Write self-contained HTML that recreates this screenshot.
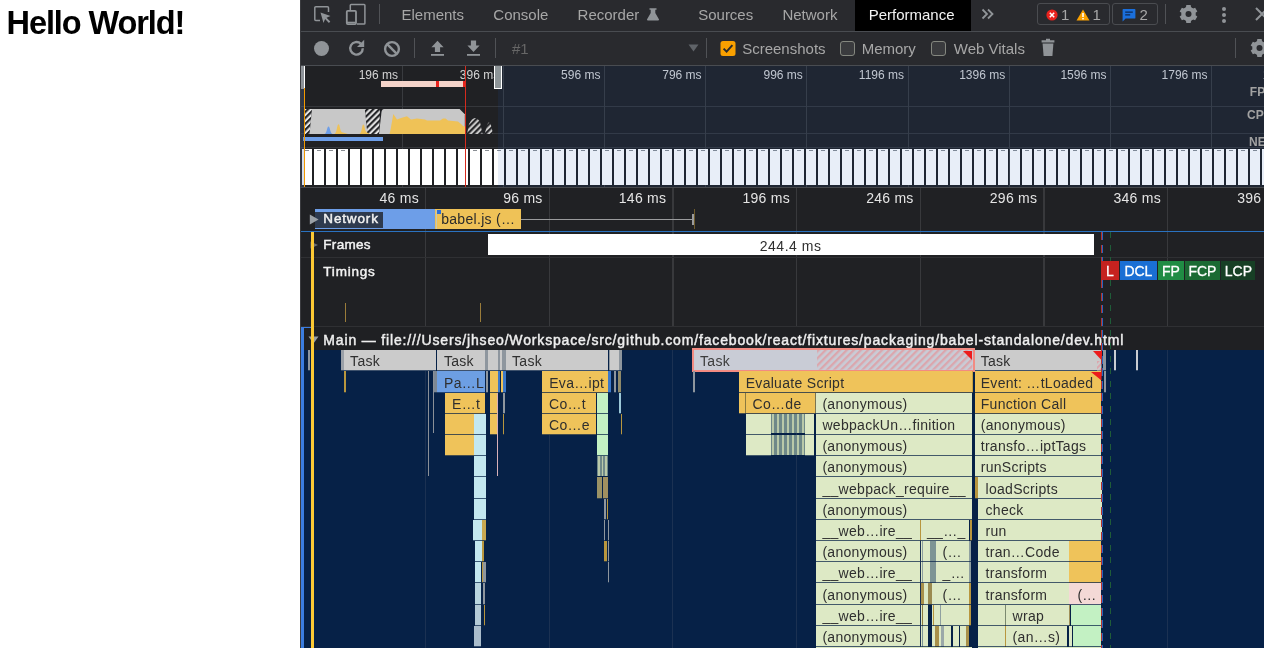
<!DOCTYPE html>
<html><head><meta charset="utf-8"><style>
html,body{margin:0;padding:0;}
body{width:1264px;height:648px;overflow:hidden;position:relative;background:#fff;font-family:"Liberation Sans",sans-serif;}
body>div,body>svg{position:absolute;box-sizing:border-box;}
</style></head><body>
<div style="filter:grayscale(1);top:7.09px;font-size:32.5px;line-height:32.5px;color:#000;font-weight:bold;white-space:nowrap;letter-spacing:-1.1px;left:6.60px;">Hello World!</div>
<div style="left:300.00px;top:0.00px;width:964.00px;height:648.00px;background:#202124;"></div>
<div style="left:300.00px;top:0.00px;width:964.00px;height:31.00px;background:#292a2e;"></div>
<div style="left:300.00px;top:31.00px;width:964.00px;height:1.00px;background:#494c51;"></div>
<div style="left:300.00px;top:32.00px;width:964.00px;height:33.00px;background:#292a2e;"></div>
<div style="left:300.00px;top:65.00px;width:964.00px;height:1.00px;background:#494c51;"></div>
<div style="left:300.00px;top:0.00px;width:1.00px;height:648.00px;background:#3a3b3f;"></div>
<svg style="left:313px;top:5px" width="20" height="20" viewBox="0 0 20 20">
<path d="M7 15.5H2.8a1 1 0 0 1-1-1V2.8a1 1 0 0 1 1-1h11.7a1 1 0 0 1 1 1V7" fill="none" stroke="#909498" stroke-width="1.5"/>
<path d="M7.5 7.5l10 3.6-4 1.6 3.8 3.8-1.4 1.4-3.8-3.8-1.6 4z" fill="#909498"/>
</svg>
<svg style="left:345px;top:3px" width="22" height="22" viewBox="0 0 22 22">
<path d="M5.3 7V2.3a0.8 0.8 0 0 1 .8-.8h13a0.8 0.8 0 0 1 .8.8v17.9a0.8 0.8 0 0 1-.8.8H12" fill="none" stroke="#909498" stroke-width="1.5"/>
<rect x="1.8" y="7.8" width="9.2" height="13.3" rx="1" fill="none" stroke="#909498" stroke-width="1.8"/>
<path d="M2 19.4h8.8" stroke="#909498" stroke-width="1.4"/>
</svg>
<div style="left:379.00px;top:4.00px;width:1.20px;height:19.50px;background:#505256;"></div>
<div style="filter:grayscale(1);top:6.50px;font-size:15px;line-height:15px;color:#a4a7ab;font-weight:normal;white-space:nowrap;left:401.50px;">Elements</div>
<div style="filter:grayscale(1);top:6.50px;font-size:15px;line-height:15px;color:#a4a7ab;font-weight:normal;white-space:nowrap;left:493.30px;">Console</div>
<div style="filter:grayscale(1);top:6.50px;font-size:15px;line-height:15px;color:#a4a7ab;font-weight:normal;white-space:nowrap;left:577.60px;">Recorder</div>
<div style="filter:grayscale(1);top:6.50px;font-size:15px;line-height:15px;color:#a4a7ab;font-weight:normal;white-space:nowrap;left:698.20px;">Sources</div>
<div style="filter:grayscale(1);top:6.50px;font-size:15px;line-height:15px;color:#a4a7ab;font-weight:normal;white-space:nowrap;left:782.40px;">Network</div>
<svg style="left:646px;top:6.5px" width="14" height="14" viewBox="0 0 14 14">
<path d="M3.5 1.2h7v1.6H9.3v3.2l3.6 6.3c.3.6 0 1.2-.7 1.2H1.8c-.7 0-1-.6-.7-1.2L4.7 6V2.8H3.5z" fill="#909498"/>
</svg>
<div style="left:855.00px;top:0.00px;width:116.00px;height:30.50px;background:#000000;"></div>
<div style="filter:grayscale(1);top:6.50px;font-size:15px;line-height:15px;color:#f1f3f4;font-weight:normal;white-space:nowrap;left:868.70px;">Performance</div>
<svg style="left:981px;top:8px" width="14" height="12" viewBox="0 0 14 12">
<path d="M1.5 1.5l4.5 4.5-4.5 4.5M7 1.5l4.5 4.5L7 10.5" fill="none" stroke="#909498" stroke-width="1.8"/>
</svg>
<div style="left:1037px;top:3.2px;width:72.5px;height:21.5px;border:1px solid #4a4c50;border-radius:3px"></div>
<div style="left:1112px;top:3.2px;width:45.5px;height:21.5px;border:1px solid #4a4c50;border-radius:3px"></div>
<svg style="left:1045.5px;top:8.5px" width="12" height="12" viewBox="0 0 12 12">
<circle cx="6" cy="6" r="5.6" fill="#e8221d"/><path d="M3.8 3.8l4.4 4.4M8.2 3.8l-4.4 4.4" stroke="#fff" stroke-width="1.5"/></svg>
<div style="filter:grayscale(1);top:6.50px;font-size:15px;line-height:15px;color:#a4a7ab;font-weight:normal;white-space:nowrap;left:1061.00px;">1</div>
<svg style="left:1076px;top:8.5px" width="14" height="12" viewBox="0 0 14 12">
<path d="M7 0.5L13.5 11.5H0.5z" fill="#f9a000"/><path d="M7 4v4" stroke="#fff" stroke-width="1.6"/><rect x="6.2" y="9" width="1.6" height="1.4" fill="#fff"/></svg>
<div style="filter:grayscale(1);top:6.50px;font-size:15px;line-height:15px;color:#a4a7ab;font-weight:normal;white-space:nowrap;left:1092.50px;">1</div>
<svg style="left:1121.5px;top:7.5px" width="14" height="14" viewBox="0 0 14 14">
<path d="M1.3 1h11.4c.4 0 .7.3.7.7v8.2c0 .4-.3.7-.7.7H3.6L.6 13.5V1.7c0-.4.3-.7.7-.7z" fill="#1a6fdc"/>
<path d="M3.2 4.2h7.6M3.2 6.8h5" stroke="#0c2a55" stroke-width="1.2"/></svg>
<div style="filter:grayscale(1);top:6.50px;font-size:15px;line-height:15px;color:#a4a7ab;font-weight:normal;white-space:nowrap;left:1139.50px;">2</div>
<div style="left:1165.00px;top:4.00px;width:1.20px;height:20.00px;background:#505256;"></div>
<svg style="left:1177px;top:4px" width="24" height="22" viewBox="0 0 24 22">
<path d="M8.97 3.28 L9.31 1.06 L13.69 1.06 L14.03 3.28 L16.05 4.45 L18.15 3.64 L20.33 7.43 L18.58 8.83 L18.58 11.17 L20.33 12.57 L18.15 16.36 L16.05 15.55 L14.03 16.72 L13.69 18.94 L9.31 18.94 L8.97 16.72 L6.95 15.55 L4.85 16.36 L2.67 12.57 L4.42 11.17 L4.42 8.83 L2.67 7.43 L4.85 3.64 L6.95 4.45Z" fill="#909498"/><circle cx="11.5" cy="10" r="6.9" fill="#909498"/><circle cx="11.5" cy="10" r="3" fill="#292a2e"/></svg>
<div style="left:1222px;top:6.5px;width:4px;height:4px;border-radius:50%;background:#909498"></div>
<div style="left:1222px;top:12.5px;width:4px;height:4px;border-radius:50%;background:#909498"></div>
<div style="left:1222px;top:18.8px;width:4px;height:4px;border-radius:50%;background:#909498"></div>
<svg style="left:1254px;top:6px" width="16" height="16" viewBox="0 0 16 16">
<path d="M2 2l12 12M14 2L2 14" stroke="#909498" stroke-width="2"/></svg>
<div style="left:314px;top:40.5px;width:15px;height:15px;border-radius:50%;background:#909498"></div>
<svg style="left:347px;top:38px" width="20" height="20" viewBox="0 0 20 20">
<path d="M15.8 10.3a6.3 6.3 0 1 1-2-4.6" fill="none" stroke="#909498" stroke-width="2.4"/>
<path d="M17.2 1.8v7.2h-7.2z" fill="#909498"/></svg>
<svg style="left:382px;top:39px" width="20" height="20" viewBox="0 0 20 20">
<circle cx="10" cy="10" r="6.9" fill="none" stroke="#909498" stroke-width="2.4"/><path d="M5.2 5.2l9.6 9.6" stroke="#909498" stroke-width="2.4"/></svg>
<div style="left:414.20px;top:38.00px;width:1.20px;height:19.70px;background:#505256;"></div>
<svg style="left:430px;top:40px" width="15" height="17" viewBox="0 0 15 17">
<path d="M7.5 0.8L13.6 7.2H10.1V12H4.9V7.2H1.4z" fill="#909498"/><rect x="1" y="14" width="13" height="1.8" fill="#909498"/></svg>
<svg style="left:465.5px;top:40px" width="15" height="17" viewBox="0 0 15 17">
<path d="M4.9 0.5h5.2v5h3.5L7.5 11.9 1.4 5.5h3.5z" fill="#909498"/><rect x="1" y="14" width="13" height="1.8" fill="#909498"/></svg>
<div style="left:495.00px;top:38.00px;width:1.20px;height:19.70px;background:#505256;"></div>
<div style="filter:grayscale(1);top:41.30px;font-size:15px;line-height:15px;color:#62666b;font-weight:normal;white-space:nowrap;left:512.00px;">#1</div>
<svg style="left:687.5px;top:44px" width="11" height="8" viewBox="0 0 11 8"><path d="M0.5 0.5h10L5.5 7.5z" fill="#5f6368"/></svg>
<div style="left:706.00px;top:38.00px;width:1.20px;height:19.70px;background:#505256;"></div>
<svg style="left:719.5px;top:41px" width="16" height="15" viewBox="0 0 16 15">
<rect x="0.5" y="0" width="15" height="15" rx="2.5" fill="#f9a000"/><path d="M3.6 7.6l3 3 5.8-6.4" fill="none" stroke="#2a2a2a" stroke-width="2"/></svg>
<div style="filter:grayscale(1);top:40.80px;font-size:15px;line-height:15px;color:#a4a7ab;font-weight:normal;white-space:nowrap;left:742.20px;">Screenshots</div>
<div style="left:840px;top:41.4px;width:15px;height:14.3px;border:1.2px solid #84877f;border-radius:3px;background:#3a3b3e"></div>
<div style="filter:grayscale(1);top:40.80px;font-size:15px;line-height:15px;color:#a4a7ab;font-weight:normal;white-space:nowrap;left:861.70px;">Memory</div>
<div style="left:930.8px;top:41.4px;width:15px;height:14.3px;border:1.2px solid #84877f;border-radius:3px;background:#3a3b3e"></div>
<div style="filter:grayscale(1);top:40.80px;font-size:15px;line-height:15px;color:#a4a7ab;font-weight:normal;white-space:nowrap;left:953.80px;">Web Vitals</div>
<svg style="left:1040.5px;top:38px" width="14" height="19" viewBox="0 0 14 19">
<path d="M5 0.8h4v1.4h4.4v2.3H0.6V2.2H5z" fill="#909498"/><path d="M1.6 5.5h10.8l-1 12.6H2.6z" fill="#909498"/></svg>
<div style="left:1235.00px;top:38.00px;width:1.20px;height:19.70px;background:#505256;"></div>
<svg style="left:1247.5px;top:38.5px" width="24" height="22" viewBox="0 0 24 22">
<path d="M8.97 2.28 L9.31 0.06 L13.69 0.06 L14.03 2.28 L16.05 3.45 L18.15 2.64 L20.33 6.43 L18.58 7.83 L18.58 10.17 L20.33 11.57 L18.15 15.36 L16.05 14.55 L14.03 15.72 L13.69 17.94 L9.31 17.94 L8.97 15.72 L6.95 14.55 L4.85 15.36 L2.67 11.57 L4.42 10.17 L4.42 7.83 L2.67 6.43 L4.85 2.64 L6.95 3.45Z" fill="#909498"/><circle cx="11.5" cy="9" r="6.9" fill="#909498"/><circle cx="11.5" cy="9" r="3" fill="#292a2e"/></svg>
<div style="left:301.00px;top:66.00px;width:963.00px;height:121.00px;background:#202124;"></div>
<div style="left:301.00px;top:106.00px;width:963.00px;height:1.00px;background:#35373b;"></div>
<div style="left:301.00px;top:133.00px;width:963.00px;height:1.00px;background:#35373b;"></div>
<div style="left:301.00px;top:147.00px;width:963.00px;height:1.00px;background:#35373b;"></div>
<div style="left:401.50px;top:66.00px;width:1.20px;height:121.00px;background:#393b3f;"></div>
<div style="left:502.70px;top:66.00px;width:1.20px;height:121.00px;background:#393b3f;"></div>
<div style="left:603.90px;top:66.00px;width:1.20px;height:121.00px;background:#393b3f;"></div>
<div style="left:705.10px;top:66.00px;width:1.20px;height:121.00px;background:#393b3f;"></div>
<div style="left:806.30px;top:66.00px;width:1.20px;height:121.00px;background:#393b3f;"></div>
<div style="left:907.50px;top:66.00px;width:1.20px;height:121.00px;background:#393b3f;"></div>
<div style="left:1008.70px;top:66.00px;width:1.20px;height:121.00px;background:#393b3f;"></div>
<div style="left:1109.90px;top:66.00px;width:1.20px;height:121.00px;background:#393b3f;"></div>
<div style="left:1211.10px;top:66.00px;width:1.20px;height:121.00px;background:#393b3f;"></div>
<div style="filter:grayscale(1);top:68.64px;font-size:12px;line-height:12px;color:#d0d3d8;font-weight:normal;white-space:nowrap;right:866.00px;">196 ms</div>
<div style="filter:grayscale(1);top:68.64px;font-size:12px;line-height:12px;color:#d0d3d8;font-weight:normal;white-space:nowrap;right:764.80px;">396 ms</div>
<div style="filter:grayscale(1);top:68.64px;font-size:12px;line-height:12px;color:#d0d3d8;font-weight:normal;white-space:nowrap;right:663.60px;">596 ms</div>
<div style="filter:grayscale(1);top:68.64px;font-size:12px;line-height:12px;color:#d0d3d8;font-weight:normal;white-space:nowrap;right:562.40px;">796 ms</div>
<div style="filter:grayscale(1);top:68.64px;font-size:12px;line-height:12px;color:#d0d3d8;font-weight:normal;white-space:nowrap;right:461.20px;">996 ms</div>
<div style="filter:grayscale(1);top:68.64px;font-size:12px;line-height:12px;color:#d0d3d8;font-weight:normal;white-space:nowrap;right:360.00px;">1196 ms</div>
<div style="filter:grayscale(1);top:68.64px;font-size:12px;line-height:12px;color:#d0d3d8;font-weight:normal;white-space:nowrap;right:258.80px;">1396 ms</div>
<div style="filter:grayscale(1);top:68.64px;font-size:12px;line-height:12px;color:#d0d3d8;font-weight:normal;white-space:nowrap;right:157.60px;">1596 ms</div>
<div style="filter:grayscale(1);top:68.64px;font-size:12px;line-height:12px;color:#d0d3d8;font-weight:normal;white-space:nowrap;right:56.40px;">1796 ms</div>
<div style="filter:grayscale(1);top:68.64px;font-size:12px;line-height:12px;color:#d0d3d8;font-weight:normal;white-space:nowrap;right:-44.80px;">1996 ms</div>
<svg style="left:300px;top:106px" width="200" height="30" viewBox="300 106 200 30">
<defs><pattern id="hb" patternUnits="userSpaceOnUse" width="4.2" height="4.2" patternTransform="rotate(45)">
<rect width="4.2" height="4.2" fill="#e2e2e2"/><rect width="2.1" height="4.2" fill="#202124"/></pattern>
<pattern id="hd" patternUnits="userSpaceOnUse" width="4.2" height="4.2" patternTransform="rotate(45)">
<rect width="4.2" height="4.2" fill="#c8c8c8"/><rect width="2.1" height="4.2" fill="#202124"/></pattern></defs>
<path d="M305 109H312L309.5 134H305z" fill="url(#hb)"/>
<path d="M312 109H365L367.5 134H309.5z" fill="#c8c8c8"/>
<path d="M365 109H380L379 134H367.5z" fill="url(#hb)"/>
<path d="M384 109H459.6L464.8 114.3V134H379L381.5 112Q382 109 384 109z" fill="#c8c8c8"/>
<path d="M324.5 134C327 133 327 126.5 328.5 126.5C330 126.5 330 133 332.5 134z" fill="#6d9ee8"/>
<path d="M334.5 134C337 133 337 124.2 338.4 124.2C340 124.2 339.8 131 342 132.2L348 134z" fill="#efc257"/>
<path d="M359.5 134C362 133 362 124.6 363.3 124.6C364.8 124.6 364.6 131.5 366.8 132.5L370 134z" fill="#efc257"/>
<path d="M389.5 134L390.5 130L393.3 114L395 116.5L397 119.5L401 118L407 116.2L411 119.5L417 118.5L425 119.5L427 120.5L440 120.5L443 118.5L445.5 118.5L448 120.5L458 121.5L461 124L463 126L465 126.5V134z" fill="#efc257"/>
<path d="M467 134L469 124Q474.5 113 480 122L482.5 134z" fill="url(#hd)"/>
<path d="M484.7 134L486.5 127Q489 118 491.5 127L493 134z" fill="url(#hd)"/>
</svg>
<div style="left:303.00px;top:137.00px;width:80.00px;height:4.00px;background:#6d9ee8;"></div>
<div style="left:381.00px;top:81.00px;width:84.20px;height:6.00px;background:#f4d3c9;"></div>
<div style="left:436.40px;top:81.00px;width:3.10px;height:6.00px;background:#e8231d;"></div>
<div style="left:462.50px;top:81.00px;width:2.70px;height:6.00px;background:#e8231d;"></div>
<div style="left:302.00px;top:149.00px;width:10.00px;height:36.00px;background:#ffffff;"></div>
<div style="left:305.00px;top:150.20px;width:3.50px;height:0.80px;background:#8a8e94;"></div>
<div style="left:314.00px;top:149.00px;width:10.00px;height:36.00px;background:#ffffff;"></div>
<div style="left:317.00px;top:150.20px;width:3.50px;height:0.80px;background:#8a8e94;"></div>
<div style="left:326.00px;top:149.00px;width:10.00px;height:36.00px;background:#ffffff;"></div>
<div style="left:329.00px;top:150.20px;width:3.50px;height:0.80px;background:#8a8e94;"></div>
<div style="left:338.00px;top:149.00px;width:10.00px;height:36.00px;background:#ffffff;"></div>
<div style="left:341.00px;top:150.20px;width:3.50px;height:0.80px;background:#8a8e94;"></div>
<div style="left:350.00px;top:149.00px;width:10.00px;height:36.00px;background:#ffffff;"></div>
<div style="left:362.00px;top:149.00px;width:10.00px;height:36.00px;background:#ffffff;"></div>
<div style="left:374.00px;top:149.00px;width:10.00px;height:36.00px;background:#ffffff;"></div>
<div style="left:386.00px;top:149.00px;width:10.00px;height:36.00px;background:#ffffff;"></div>
<div style="left:398.00px;top:149.00px;width:10.00px;height:36.00px;background:#ffffff;"></div>
<div style="left:410.00px;top:149.00px;width:10.00px;height:36.00px;background:#ffffff;"></div>
<div style="left:422.00px;top:149.00px;width:10.00px;height:36.00px;background:#ffffff;"></div>
<div style="left:434.00px;top:149.00px;width:10.00px;height:36.00px;background:#ffffff;"></div>
<div style="left:446.00px;top:149.00px;width:10.00px;height:36.00px;background:#ffffff;"></div>
<div style="left:458.00px;top:149.00px;width:10.00px;height:36.00px;background:#ffffff;"></div>
<div style="left:470.00px;top:149.00px;width:10.00px;height:36.00px;background:#ffffff;"></div>
<div style="left:473.00px;top:150.20px;width:3.50px;height:0.80px;background:#8a8e94;"></div>
<div style="left:482.00px;top:149.00px;width:10.00px;height:36.00px;background:#ffffff;"></div>
<div style="left:485.00px;top:150.20px;width:3.50px;height:0.80px;background:#8a8e94;"></div>
<div style="left:494.00px;top:149.00px;width:10.00px;height:36.00px;background:#ffffff;"></div>
<div style="left:497.00px;top:150.20px;width:3.50px;height:0.80px;background:#8a8e94;"></div>
<div style="left:506.00px;top:149.00px;width:10.00px;height:36.00px;background:#ffffff;"></div>
<div style="left:509.00px;top:150.20px;width:3.50px;height:0.80px;background:#8a8e94;"></div>
<div style="left:518.00px;top:149.00px;width:10.00px;height:36.00px;background:#ffffff;"></div>
<div style="left:521.00px;top:150.20px;width:3.50px;height:0.80px;background:#8a8e94;"></div>
<div style="left:530.00px;top:149.00px;width:10.00px;height:36.00px;background:#ffffff;"></div>
<div style="left:533.00px;top:150.20px;width:3.50px;height:0.80px;background:#8a8e94;"></div>
<div style="left:542.00px;top:149.00px;width:10.00px;height:36.00px;background:#ffffff;"></div>
<div style="left:545.00px;top:150.20px;width:3.50px;height:0.80px;background:#8a8e94;"></div>
<div style="left:554.00px;top:149.00px;width:10.00px;height:36.00px;background:#ffffff;"></div>
<div style="left:557.00px;top:150.20px;width:3.50px;height:0.80px;background:#8a8e94;"></div>
<div style="left:566.00px;top:149.00px;width:10.00px;height:36.00px;background:#ffffff;"></div>
<div style="left:569.00px;top:150.20px;width:3.50px;height:0.80px;background:#8a8e94;"></div>
<div style="left:578.00px;top:149.00px;width:10.00px;height:36.00px;background:#ffffff;"></div>
<div style="left:581.00px;top:150.20px;width:3.50px;height:0.80px;background:#8a8e94;"></div>
<div style="left:590.00px;top:149.00px;width:10.00px;height:36.00px;background:#ffffff;"></div>
<div style="left:593.00px;top:150.20px;width:3.50px;height:0.80px;background:#8a8e94;"></div>
<div style="left:602.00px;top:149.00px;width:10.00px;height:36.00px;background:#ffffff;"></div>
<div style="left:605.00px;top:150.20px;width:3.50px;height:0.80px;background:#8a8e94;"></div>
<div style="left:614.00px;top:149.00px;width:10.00px;height:36.00px;background:#ffffff;"></div>
<div style="left:617.00px;top:150.20px;width:3.50px;height:0.80px;background:#8a8e94;"></div>
<div style="left:626.00px;top:149.00px;width:10.00px;height:36.00px;background:#ffffff;"></div>
<div style="left:629.00px;top:150.20px;width:3.50px;height:0.80px;background:#8a8e94;"></div>
<div style="left:638.00px;top:149.00px;width:10.00px;height:36.00px;background:#ffffff;"></div>
<div style="left:641.00px;top:150.20px;width:3.50px;height:0.80px;background:#8a8e94;"></div>
<div style="left:650.00px;top:149.00px;width:10.00px;height:36.00px;background:#ffffff;"></div>
<div style="left:653.00px;top:150.20px;width:3.50px;height:0.80px;background:#8a8e94;"></div>
<div style="left:662.00px;top:149.00px;width:10.00px;height:36.00px;background:#ffffff;"></div>
<div style="left:665.00px;top:150.20px;width:3.50px;height:0.80px;background:#8a8e94;"></div>
<div style="left:674.00px;top:149.00px;width:10.00px;height:36.00px;background:#ffffff;"></div>
<div style="left:677.00px;top:150.20px;width:3.50px;height:0.80px;background:#8a8e94;"></div>
<div style="left:686.00px;top:149.00px;width:10.00px;height:36.00px;background:#ffffff;"></div>
<div style="left:689.00px;top:150.20px;width:3.50px;height:0.80px;background:#8a8e94;"></div>
<div style="left:698.00px;top:149.00px;width:10.00px;height:36.00px;background:#ffffff;"></div>
<div style="left:701.00px;top:150.20px;width:3.50px;height:0.80px;background:#8a8e94;"></div>
<div style="left:710.00px;top:149.00px;width:10.00px;height:36.00px;background:#ffffff;"></div>
<div style="left:713.00px;top:150.20px;width:3.50px;height:0.80px;background:#8a8e94;"></div>
<div style="left:722.00px;top:149.00px;width:10.00px;height:36.00px;background:#ffffff;"></div>
<div style="left:725.00px;top:150.20px;width:3.50px;height:0.80px;background:#8a8e94;"></div>
<div style="left:734.00px;top:149.00px;width:10.00px;height:36.00px;background:#ffffff;"></div>
<div style="left:737.00px;top:150.20px;width:3.50px;height:0.80px;background:#8a8e94;"></div>
<div style="left:746.00px;top:149.00px;width:10.00px;height:36.00px;background:#ffffff;"></div>
<div style="left:749.00px;top:150.20px;width:3.50px;height:0.80px;background:#8a8e94;"></div>
<div style="left:758.00px;top:149.00px;width:10.00px;height:36.00px;background:#ffffff;"></div>
<div style="left:761.00px;top:150.20px;width:3.50px;height:0.80px;background:#8a8e94;"></div>
<div style="left:770.00px;top:149.00px;width:10.00px;height:36.00px;background:#ffffff;"></div>
<div style="left:773.00px;top:150.20px;width:3.50px;height:0.80px;background:#8a8e94;"></div>
<div style="left:782.00px;top:149.00px;width:10.00px;height:36.00px;background:#ffffff;"></div>
<div style="left:785.00px;top:150.20px;width:3.50px;height:0.80px;background:#8a8e94;"></div>
<div style="left:794.00px;top:149.00px;width:10.00px;height:36.00px;background:#ffffff;"></div>
<div style="left:797.00px;top:150.20px;width:3.50px;height:0.80px;background:#8a8e94;"></div>
<div style="left:806.00px;top:149.00px;width:10.00px;height:36.00px;background:#ffffff;"></div>
<div style="left:809.00px;top:150.20px;width:3.50px;height:0.80px;background:#8a8e94;"></div>
<div style="left:818.00px;top:149.00px;width:10.00px;height:36.00px;background:#ffffff;"></div>
<div style="left:821.00px;top:150.20px;width:3.50px;height:0.80px;background:#8a8e94;"></div>
<div style="left:830.00px;top:149.00px;width:10.00px;height:36.00px;background:#ffffff;"></div>
<div style="left:833.00px;top:150.20px;width:3.50px;height:0.80px;background:#8a8e94;"></div>
<div style="left:842.00px;top:149.00px;width:10.00px;height:36.00px;background:#ffffff;"></div>
<div style="left:845.00px;top:150.20px;width:3.50px;height:0.80px;background:#8a8e94;"></div>
<div style="left:854.00px;top:149.00px;width:10.00px;height:36.00px;background:#ffffff;"></div>
<div style="left:857.00px;top:150.20px;width:3.50px;height:0.80px;background:#8a8e94;"></div>
<div style="left:866.00px;top:149.00px;width:10.00px;height:36.00px;background:#ffffff;"></div>
<div style="left:869.00px;top:150.20px;width:3.50px;height:0.80px;background:#8a8e94;"></div>
<div style="left:878.00px;top:149.00px;width:10.00px;height:36.00px;background:#ffffff;"></div>
<div style="left:881.00px;top:150.20px;width:3.50px;height:0.80px;background:#8a8e94;"></div>
<div style="left:890.00px;top:149.00px;width:10.00px;height:36.00px;background:#ffffff;"></div>
<div style="left:893.00px;top:150.20px;width:3.50px;height:0.80px;background:#8a8e94;"></div>
<div style="left:902.00px;top:149.00px;width:10.00px;height:36.00px;background:#ffffff;"></div>
<div style="left:905.00px;top:150.20px;width:3.50px;height:0.80px;background:#8a8e94;"></div>
<div style="left:914.00px;top:149.00px;width:10.00px;height:36.00px;background:#ffffff;"></div>
<div style="left:917.00px;top:150.20px;width:3.50px;height:0.80px;background:#8a8e94;"></div>
<div style="left:926.00px;top:149.00px;width:10.00px;height:36.00px;background:#ffffff;"></div>
<div style="left:929.00px;top:150.20px;width:3.50px;height:0.80px;background:#8a8e94;"></div>
<div style="left:938.00px;top:149.00px;width:10.00px;height:36.00px;background:#ffffff;"></div>
<div style="left:941.00px;top:150.20px;width:3.50px;height:0.80px;background:#8a8e94;"></div>
<div style="left:950.00px;top:149.00px;width:10.00px;height:36.00px;background:#ffffff;"></div>
<div style="left:953.00px;top:150.20px;width:3.50px;height:0.80px;background:#8a8e94;"></div>
<div style="left:962.00px;top:149.00px;width:10.00px;height:36.00px;background:#ffffff;"></div>
<div style="left:965.00px;top:150.20px;width:3.50px;height:0.80px;background:#8a8e94;"></div>
<div style="left:974.00px;top:149.00px;width:10.00px;height:36.00px;background:#ffffff;"></div>
<div style="left:977.00px;top:150.20px;width:3.50px;height:0.80px;background:#8a8e94;"></div>
<div style="left:986.00px;top:149.00px;width:10.00px;height:36.00px;background:#ffffff;"></div>
<div style="left:989.00px;top:150.20px;width:3.50px;height:0.80px;background:#8a8e94;"></div>
<div style="left:998.00px;top:149.00px;width:10.00px;height:36.00px;background:#ffffff;"></div>
<div style="left:1001.00px;top:150.20px;width:3.50px;height:0.80px;background:#8a8e94;"></div>
<div style="left:1010.00px;top:149.00px;width:10.00px;height:36.00px;background:#ffffff;"></div>
<div style="left:1013.00px;top:150.20px;width:3.50px;height:0.80px;background:#8a8e94;"></div>
<div style="left:1022.00px;top:149.00px;width:10.00px;height:36.00px;background:#ffffff;"></div>
<div style="left:1025.00px;top:150.20px;width:3.50px;height:0.80px;background:#8a8e94;"></div>
<div style="left:1034.00px;top:149.00px;width:10.00px;height:36.00px;background:#ffffff;"></div>
<div style="left:1037.00px;top:150.20px;width:3.50px;height:0.80px;background:#8a8e94;"></div>
<div style="left:1046.00px;top:149.00px;width:10.00px;height:36.00px;background:#ffffff;"></div>
<div style="left:1049.00px;top:150.20px;width:3.50px;height:0.80px;background:#8a8e94;"></div>
<div style="left:1058.00px;top:149.00px;width:10.00px;height:36.00px;background:#ffffff;"></div>
<div style="left:1061.00px;top:150.20px;width:3.50px;height:0.80px;background:#8a8e94;"></div>
<div style="left:1070.00px;top:149.00px;width:10.00px;height:36.00px;background:#ffffff;"></div>
<div style="left:1073.00px;top:150.20px;width:3.50px;height:0.80px;background:#8a8e94;"></div>
<div style="left:1082.00px;top:149.00px;width:10.00px;height:36.00px;background:#ffffff;"></div>
<div style="left:1085.00px;top:150.20px;width:3.50px;height:0.80px;background:#8a8e94;"></div>
<div style="left:1094.00px;top:149.00px;width:10.00px;height:36.00px;background:#ffffff;"></div>
<div style="left:1097.00px;top:150.20px;width:3.50px;height:0.80px;background:#8a8e94;"></div>
<div style="left:1106.00px;top:149.00px;width:10.00px;height:36.00px;background:#ffffff;"></div>
<div style="left:1109.00px;top:150.20px;width:3.50px;height:0.80px;background:#8a8e94;"></div>
<div style="left:1118.00px;top:149.00px;width:10.00px;height:36.00px;background:#ffffff;"></div>
<div style="left:1121.00px;top:150.20px;width:3.50px;height:0.80px;background:#8a8e94;"></div>
<div style="left:1130.00px;top:149.00px;width:10.00px;height:36.00px;background:#ffffff;"></div>
<div style="left:1133.00px;top:150.20px;width:3.50px;height:0.80px;background:#8a8e94;"></div>
<div style="left:1142.00px;top:149.00px;width:10.00px;height:36.00px;background:#ffffff;"></div>
<div style="left:1145.00px;top:150.20px;width:3.50px;height:0.80px;background:#8a8e94;"></div>
<div style="left:1154.00px;top:149.00px;width:10.00px;height:36.00px;background:#ffffff;"></div>
<div style="left:1157.00px;top:150.20px;width:3.50px;height:0.80px;background:#8a8e94;"></div>
<div style="left:1166.00px;top:149.00px;width:10.00px;height:36.00px;background:#ffffff;"></div>
<div style="left:1169.00px;top:150.20px;width:3.50px;height:0.80px;background:#8a8e94;"></div>
<div style="left:1178.00px;top:149.00px;width:10.00px;height:36.00px;background:#ffffff;"></div>
<div style="left:1181.00px;top:150.20px;width:3.50px;height:0.80px;background:#8a8e94;"></div>
<div style="left:1190.00px;top:149.00px;width:10.00px;height:36.00px;background:#ffffff;"></div>
<div style="left:1193.00px;top:150.20px;width:3.50px;height:0.80px;background:#8a8e94;"></div>
<div style="left:1202.00px;top:149.00px;width:10.00px;height:36.00px;background:#ffffff;"></div>
<div style="left:1205.00px;top:150.20px;width:3.50px;height:0.80px;background:#8a8e94;"></div>
<div style="left:1214.00px;top:149.00px;width:10.00px;height:36.00px;background:#ffffff;"></div>
<div style="left:1217.00px;top:150.20px;width:3.50px;height:0.80px;background:#8a8e94;"></div>
<div style="left:1226.00px;top:149.00px;width:10.00px;height:36.00px;background:#ffffff;"></div>
<div style="left:1229.00px;top:150.20px;width:3.50px;height:0.80px;background:#8a8e94;"></div>
<div style="left:1238.00px;top:149.00px;width:10.00px;height:36.00px;background:#ffffff;"></div>
<div style="left:1241.00px;top:150.20px;width:3.50px;height:0.80px;background:#8a8e94;"></div>
<div style="left:1250.00px;top:149.00px;width:10.00px;height:36.00px;background:#ffffff;"></div>
<div style="left:1253.00px;top:150.20px;width:3.50px;height:0.80px;background:#8a8e94;"></div>
<div style="left:1262.00px;top:149.00px;width:10.00px;height:36.00px;background:#ffffff;"></div>
<div style="left:1265.00px;top:150.20px;width:3.50px;height:0.80px;background:#8a8e94;"></div>
<div style="left:301.00px;top:88.00px;width:3.00px;height:99.00px;background:rgba(90,120,170,0.25);"></div>
<div style="left:497.50px;top:89.00px;width:766.50px;height:98.00px;background:rgba(25,85,185,0.1);"></div>
<div style="left:497.50px;top:66.00px;width:766.50px;height:23.00px;background:rgba(25,85,185,0.1);"></div>
<div style="filter:grayscale(1);top:85.74px;font-size:12px;line-height:12px;color:#9aa3b0;font-weight:bold;white-space:nowrap;left:1249.80px;">FPS</div>
<div style="filter:grayscale(1);top:108.54px;font-size:12px;line-height:12px;color:#9aa3b0;font-weight:bold;white-space:nowrap;left:1247.10px;">CPU</div>
<div style="filter:grayscale(1);top:135.54px;font-size:12px;line-height:12px;color:#9aa3b0;font-weight:bold;white-space:nowrap;left:1249.10px;">NET</div>
<div style="left:301px;top:66px;width:4px;height:22.5px;background:#8e9399;border-right:1px solid #fff"></div>
<div style="left:493.8px;top:66px;width:8px;height:23px;background:#8e9598;border:1px solid #fff;border-top:0"></div>
<div style="left:304.00px;top:88.00px;width:1.20px;height:99.00px;background:#f29900;"></div>
<div style="left:464.90px;top:66.00px;width:1.40px;height:121.00px;background:#d52b1e;"></div>
<div style="left:300.00px;top:187.00px;width:964.00px;height:1.00px;background:#46484c;"></div>
<div style="left:301.00px;top:188.00px;width:963.00px;height:162.00px;background:#202124;"></div>
<div style="left:425.00px;top:188.00px;width:1.20px;height:162.00px;background:#38393c;"></div>
<div style="left:548.67px;top:188.00px;width:1.20px;height:162.00px;background:#38393c;"></div>
<div style="left:672.34px;top:188.00px;width:1.20px;height:162.00px;background:#38393c;"></div>
<div style="left:796.01px;top:188.00px;width:1.20px;height:162.00px;background:#38393c;"></div>
<div style="left:919.68px;top:188.00px;width:1.20px;height:162.00px;background:#38393c;"></div>
<div style="left:1043.35px;top:188.00px;width:1.20px;height:162.00px;background:#38393c;"></div>
<div style="left:1167.02px;top:188.00px;width:1.20px;height:162.00px;background:#38393c;"></div>
<div style="left:1290.69px;top:188.00px;width:1.20px;height:162.00px;background:#38393c;"></div>
<div style="filter:grayscale(1);top:191.35px;font-size:14px;line-height:14px;color:#e3e4e6;font-weight:normal;white-space:nowrap;letter-spacing:0.25px;right:845.10px;">46 ms</div>
<div style="filter:grayscale(1);top:191.35px;font-size:14px;line-height:14px;color:#e3e4e6;font-weight:normal;white-space:nowrap;letter-spacing:0.25px;right:721.43px;">96 ms</div>
<div style="filter:grayscale(1);top:191.35px;font-size:14px;line-height:14px;color:#e3e4e6;font-weight:normal;white-space:nowrap;letter-spacing:0.25px;right:597.76px;">146 ms</div>
<div style="filter:grayscale(1);top:191.35px;font-size:14px;line-height:14px;color:#e3e4e6;font-weight:normal;white-space:nowrap;letter-spacing:0.25px;right:474.09px;">196 ms</div>
<div style="filter:grayscale(1);top:191.35px;font-size:14px;line-height:14px;color:#e3e4e6;font-weight:normal;white-space:nowrap;letter-spacing:0.25px;right:350.42px;">246 ms</div>
<div style="filter:grayscale(1);top:191.35px;font-size:14px;line-height:14px;color:#e3e4e6;font-weight:normal;white-space:nowrap;letter-spacing:0.25px;right:226.75px;">296 ms</div>
<div style="filter:grayscale(1);top:191.35px;font-size:14px;line-height:14px;color:#e3e4e6;font-weight:normal;white-space:nowrap;letter-spacing:0.25px;right:103.08px;">346 ms</div>
<div style="filter:grayscale(1);top:191.35px;font-size:14px;line-height:14px;color:#e3e4e6;font-weight:normal;white-space:nowrap;letter-spacing:0.25px;right:-20.59px;">396 ms</div>
<div style="left:314.50px;top:208.90px;width:120.00px;height:20.20px;background:#6d9ee8;"></div>
<div style="left:314.50px;top:212.30px;width:68.30px;height:15.50px;background:#2e3a4e;"></div>
<svg style="left:308.5px;top:213.5px" width="11" height="11" viewBox="0 0 11 11"><path d="M0.8 0.6L9.6 5.5L0.8 10.4z" fill="#9aa0a6"/></svg>
<div style="filter:grayscale(1);top:212.27px;font-size:13.5px;line-height:13.5px;color:#f1f3f4;font-weight:normal;white-space:nowrap;letter-spacing:0.85px;-webkit-text-stroke:0.45px #f1f3f4;left:323.30px;">Network</div>
<div style="left:435.00px;top:208.90px;width:85.60px;height:20.20px;background:#efc257;"></div>
<div style="left:435.80px;top:209.50px;width:1.00px;height:19.00px;background:#c9c9b0;"></div>
<div style="left:437.20px;top:210.00px;width:3.80px;height:4.00px;background:#2e6fd6;"></div>
<div style="filter:grayscale(1);top:211.85px;font-size:14px;line-height:14px;color:#2b2b2b;font-weight:normal;white-space:nowrap;letter-spacing:0.3px;left:441.20px;">babel.js (…</div>
<div style="left:520.60px;top:218.80px;width:172.70px;height:1.40px;background:#9a9b9d;"></div>
<div style="left:692.30px;top:214.00px;width:1.30px;height:11.00px;background:#9a9b9d;"></div>
<div style="left:693.80px;top:209.00px;width:1.00px;height:20.00px;background:#6d5a2a;"></div>
<div style="left:301.00px;top:231.00px;width:963.00px;height:1.20px;background:#2a72c0;"></div>
<svg style="left:310px;top:241px" width="9" height="8" viewBox="0 0 9 8"><path d="M0.5 0.5L8 4L0.5 7.5z" fill="#6b6e72"/></svg>
<div style="filter:grayscale(1);top:238.27px;font-size:13.5px;line-height:13.5px;color:#f1f3f4;font-weight:normal;white-space:nowrap;letter-spacing:0.3px;-webkit-text-stroke:0.45px #f1f3f4;left:323.30px;">Frames</div>
<div style="left:488.20px;top:233.90px;width:605.70px;height:21.60px;background:#ffffff;"></div>
<div style="filter:grayscale(1);top:238.95px;font-size:14px;line-height:14px;color:#303030;font-weight:normal;white-space:nowrap;letter-spacing:0.5px;left:490.60px;width:600px;text-align:center;">244.4 ms</div>
<div style="left:301.00px;top:256.80px;width:963.00px;height:1.00px;background:#2f3033;"></div>
<div style="filter:grayscale(1);top:264.57px;font-size:13.5px;line-height:13.5px;color:#f1f3f4;font-weight:normal;white-space:nowrap;letter-spacing:0.8px;-webkit-text-stroke:0.45px #f1f3f4;left:323.30px;">Timings</div>
<div style="left:1101.20px;top:260.70px;width:17.40px;height:19.70px;background:#c5221f;"></div>
<div style="filter:grayscale(1);top:263.75px;font-size:14px;line-height:14px;color:#ffffff;font-weight:normal;white-space:nowrap;-webkit-text-stroke:0.3px #ffffff;left:809.90px;width:600px;text-align:center;">L</div>
<div style="left:1119.70px;top:260.70px;width:37.40px;height:19.70px;background:#1a6fd4;"></div>
<div style="filter:grayscale(1);top:263.75px;font-size:14px;line-height:14px;color:#ffffff;font-weight:normal;white-space:nowrap;-webkit-text-stroke:0.3px #ffffff;left:838.40px;width:600px;text-align:center;">DCL</div>
<div style="left:1158.40px;top:260.70px;width:25.20px;height:19.70px;background:#208c44;"></div>
<div style="filter:grayscale(1);top:263.75px;font-size:14px;line-height:14px;color:#ffffff;font-weight:normal;white-space:nowrap;-webkit-text-stroke:0.3px #ffffff;left:871.00px;width:600px;text-align:center;">FP</div>
<div style="left:1185.10px;top:260.70px;width:34.70px;height:19.70px;background:#1b6a33;"></div>
<div style="filter:grayscale(1);top:263.75px;font-size:14px;line-height:14px;color:#ffffff;font-weight:normal;white-space:nowrap;-webkit-text-stroke:0.3px #ffffff;left:902.45px;width:600px;text-align:center;">FCP</div>
<div style="left:1221.30px;top:260.70px;width:34.20px;height:19.70px;background:#173f25;"></div>
<div style="filter:grayscale(1);top:263.75px;font-size:14px;line-height:14px;color:#ffffff;font-weight:normal;white-space:nowrap;-webkit-text-stroke:0.3px #ffffff;left:938.40px;width:600px;text-align:center;">LCP</div>
<div style="left:344.60px;top:303.20px;width:1.40px;height:19.10px;background:#9a7c3a;"></div>
<div style="left:479.50px;top:303.20px;width:1.40px;height:19.10px;background:#9a7c3a;"></div>
<div style="left:301.00px;top:326.00px;width:963.00px;height:1.00px;background:#2f3033;"></div>
<div style="left:301.00px;top:327.00px;width:963.00px;height:23.00px;background:#1f2023;"></div>
<svg style="left:308px;top:335.5px" width="11" height="8" viewBox="0 0 11 8"><path d="M0.5 0.5h10L5.5 7.5z" fill="#9aa0a6"/></svg>
<div style="filter:grayscale(1);top:332.95px;font-size:14px;line-height:14px;color:#eceef0;font-weight:normal;white-space:nowrap;letter-spacing:0.84px;-webkit-text-stroke:0.45px #eceef0;left:323.30px;">Main — file:///Users/jhseo/Workspace/src/github.com/facebook/react/fixtures/packaging/babel-standalone/dev.html</div>
<div style="left:301.00px;top:350.00px;width:963.00px;height:298.00px;background:#062147;"></div>
<div style="left:425.10px;top:350.00px;width:1.00px;height:298.00px;background:#1b3152;"></div>
<div style="left:548.77px;top:350.00px;width:1.00px;height:298.00px;background:#1b3152;"></div>
<div style="left:672.44px;top:350.00px;width:1.00px;height:298.00px;background:#1b3152;"></div>
<div style="left:796.11px;top:350.00px;width:1.00px;height:298.00px;background:#1b3152;"></div>
<div style="left:919.78px;top:350.00px;width:1.00px;height:298.00px;background:#1b3152;"></div>
<div style="left:1043.45px;top:350.00px;width:1.00px;height:298.00px;background:#1b3152;"></div>
<div style="left:1167.12px;top:350.00px;width:1.00px;height:298.00px;background:#1b3152;"></div>
<div style="left:1290.79px;top:350.00px;width:1.00px;height:298.00px;background:#1b3152;"></div>
<div style="left:307.60px;top:350.25px;width:2.80px;height:21.20px;background:#8e969e;border-bottom:1.5px solid rgba(6,33,71,0.72);"></div>
<div style="left:341.10px;top:350.25px;width:2.50px;height:21.20px;background:#9aa0a8;border-bottom:1.5px solid rgba(6,33,71,0.72);"></div>
<div style="left:343.60px;top:350.25px;width:92.00px;height:21.20px;background:#cbcbcb;border-bottom:1.5px solid rgba(6,33,71,0.72);"></div>
<div style="filter:grayscale(1);top:354.30px;font-size:14px;line-height:14px;color:#2f2f2f;font-weight:normal;white-space:nowrap;letter-spacing:0.3px;left:350.10px;">Task</div>
<div style="left:436.70px;top:350.25px;width:48.60px;height:21.20px;background:#cbcbcb;border-bottom:1.5px solid rgba(6,33,71,0.72);"></div>
<div style="filter:grayscale(1);top:354.30px;font-size:14px;line-height:14px;color:#2f2f2f;font-weight:normal;white-space:nowrap;letter-spacing:0.3px;left:443.90px;">Task</div>
<div style="left:485.30px;top:350.25px;width:3.00px;height:21.20px;background:#8e969e;border-bottom:1.5px solid rgba(6,33,71,0.72);"></div>
<div style="left:488.30px;top:350.25px;width:9.70px;height:21.20px;background:#cbcbcb;border-bottom:1.5px solid rgba(6,33,71,0.72);"></div>
<div style="left:498.00px;top:350.25px;width:2.00px;height:21.20px;background:#8e969e;border-bottom:1.5px solid rgba(6,33,71,0.72);"></div>
<div style="left:500.00px;top:350.25px;width:1.50px;height:21.20px;background:#cbcbcb;border-bottom:1.5px solid rgba(6,33,71,0.72);"></div>
<div style="left:502.00px;top:350.25px;width:3.70px;height:21.20px;background:#8e969e;border-bottom:1.5px solid rgba(6,33,71,0.72);"></div>
<div style="left:505.70px;top:350.25px;width:102.80px;height:21.20px;background:#cbcbcb;border-bottom:1.5px solid rgba(6,33,71,0.72);"></div>
<div style="filter:grayscale(1);top:354.30px;font-size:14px;line-height:14px;color:#2f2f2f;font-weight:normal;white-space:nowrap;letter-spacing:0.3px;left:512.00px;">Task</div>
<div style="left:608.50px;top:350.25px;width:1.50px;height:21.20px;background:#8e969e;border-bottom:1.5px solid rgba(6,33,71,0.72);"></div>
<div style="left:610.00px;top:350.25px;width:9.00px;height:21.20px;background:#cbcbcb;border-bottom:1.5px solid rgba(6,33,71,0.72);"></div>
<div style="left:619.00px;top:350.25px;width:3.00px;height:21.20px;background:#8e969e;border-bottom:1.5px solid rgba(6,33,71,0.72);"></div>
<div style="left:692.2px;top:348px;width:282.5px;height:23.7px;border:2px solid #f28b82;background:#c9ccd6"></div>
<svg style="left:817.2px;top:350px" width="155.5" height="19.7" viewBox="0 0 155.5 19.7"><defs><pattern id="ph" patternUnits="userSpaceOnUse" width="5" height="5" patternTransform="rotate(45)"><rect width="5" height="5" fill="#c9ccd6"/><rect width="2.3" height="5" fill="#dba6ad"/></pattern></defs><rect width="155.5" height="19.7" fill="url(#ph)"/></svg>
<div style="filter:grayscale(1);top:354.30px;font-size:14px;line-height:14px;color:#3a3d44;font-weight:normal;white-space:nowrap;letter-spacing:0.3px;left:700.00px;">Task</div>
<svg style="left:962.6px;top:350.6px" width="9.2" height="9.2" viewBox="0 0 10 10"><path d="M0 0H10V10z" fill="#ec1c1c"/></svg>
<div style="left:975.10px;top:350.25px;width:126.40px;height:21.20px;background:#cbcbcb;border-bottom:1.5px solid rgba(6,33,71,0.72);"></div>
<div style="filter:grayscale(1);top:354.30px;font-size:14px;line-height:14px;color:#2f2f2f;font-weight:normal;white-space:nowrap;letter-spacing:0.3px;left:980.70px;">Task</div>
<svg style="left:1097px;top:361px" width="4.5" height="9.5" viewBox="0 0 4.5 9.5"><defs><pattern id="ph2" patternUnits="userSpaceOnUse" width="4" height="4" patternTransform="rotate(45)"><rect width="4" height="4" fill="#cbcbcb"/><rect width="2" height="4" fill="#dba6ad"/></pattern></defs><rect width="4.5" height="9.5" fill="url(#ph2)"/></svg>
<svg style="left:1092.5px;top:350.6px" width="9" height="9.7" viewBox="0 0 10 10" preserveAspectRatio="none"><path d="M0 0H10V10z" fill="#ec1c1c"/></svg>
<div style="left:1103.00px;top:350.25px;width:3.40px;height:21.20px;background:#8e969e;border-bottom:1.5px solid rgba(6,33,71,0.72);"></div>
<div style="left:1114.40px;top:350.25px;width:1.60px;height:21.20px;background:#c8ccd2;border-bottom:1.5px solid rgba(6,33,71,0.72);"></div>
<div style="left:1136.30px;top:350.25px;width:1.60px;height:21.20px;background:#c8ccd2;border-bottom:1.5px solid rgba(6,33,71,0.72);"></div>
<div style="left:344.30px;top:371.45px;width:1.50px;height:21.20px;background:#b8963e;border-bottom:1.5px solid rgba(6,33,71,0.72);"></div>
<div style="left:427.80px;top:371.45px;width:1.10px;height:104.40px;background:#8a9098;"></div>
<div style="left:433.00px;top:371.45px;width:1.00px;height:62.00px;background:#8a9098;"></div>
<div style="left:434.20px;top:371.45px;width:2.80px;height:21.20px;background:#7d8894;border-bottom:1.5px solid rgba(6,33,71,0.72);"></div>
<div style="left:437.00px;top:371.45px;width:48.30px;height:21.20px;background:#6d9fe3;border-bottom:1.5px solid rgba(6,33,71,0.72);"></div>
<div style="filter:grayscale(1);top:375.50px;font-size:14px;line-height:14px;color:#2f2f2f;font-weight:normal;white-space:nowrap;letter-spacing:0.3px;left:444.00px;">Pa…L</div>
<div style="left:486.00px;top:371.45px;width:2.30px;height:21.20px;background:#8e969e;border-bottom:1.5px solid rgba(6,33,71,0.72);"></div>
<div style="left:489.70px;top:371.45px;width:8.30px;height:21.20px;background:#efc35a;border-bottom:1.5px solid rgba(6,33,71,0.72);"></div>
<div style="left:498.00px;top:371.45px;width:2.00px;height:21.20px;background:#3c78c8;border-bottom:1.5px solid rgba(6,33,71,0.72);"></div>
<div style="left:501.00px;top:371.45px;width:2.00px;height:21.20px;background:#efc35a;border-bottom:1.5px solid rgba(6,33,71,0.72);"></div>
<div style="left:503.00px;top:371.45px;width:3.00px;height:21.20px;background:#3c78c8;border-bottom:1.5px solid rgba(6,33,71,0.72);"></div>
<div style="left:542.20px;top:371.45px;width:65.80px;height:21.20px;background:#efc35a;border-bottom:1.5px solid rgba(6,33,71,0.72);"></div>
<div style="filter:grayscale(1);top:375.50px;font-size:14px;line-height:14px;color:#2f2f2f;font-weight:normal;white-space:nowrap;letter-spacing:0.3px;left:549.20px;">Eva…ipt</div>
<div style="left:608.00px;top:371.45px;width:3.00px;height:21.20px;background:#3c78c8;border-bottom:1.5px solid rgba(6,33,71,0.72);"></div>
<div style="left:614.00px;top:371.45px;width:2.00px;height:21.20px;background:#8e969e;border-bottom:1.5px solid rgba(6,33,71,0.72);"></div>
<div style="left:618.00px;top:371.45px;width:3.00px;height:21.20px;background:#8f8a6a;border-bottom:1.5px solid rgba(6,33,71,0.72);"></div>
<div style="left:693.00px;top:371.45px;width:1.50px;height:21.20px;background:#8e969e;border-bottom:1.5px solid rgba(6,33,71,0.72);"></div>
<div style="left:738.60px;top:371.45px;width:233.10px;height:21.20px;background:#efc35a;border-bottom:1.5px solid rgba(6,33,71,0.72);"></div>
<div style="filter:grayscale(1);top:375.50px;font-size:14px;line-height:14px;color:#2f2f2f;font-weight:normal;white-space:nowrap;letter-spacing:0.3px;left:745.70px;">Evaluate Script</div>
<div style="left:971.70px;top:371.45px;width:1.80px;height:21.20px;background:#c9a040;border-bottom:1.5px solid rgba(6,33,71,0.72);"></div>
<div style="left:975.10px;top:371.45px;width:126.40px;height:21.20px;background:#efc35a;border-bottom:1.5px solid rgba(6,33,71,0.72);"></div>
<div style="filter:grayscale(1);top:375.50px;font-size:14px;line-height:14px;color:#2f2f2f;font-weight:normal;white-space:nowrap;letter-spacing:0.3px;left:980.70px;">Event: …tLoaded</div>
<svg style="left:1091px;top:371.9px" width="10.5" height="8.5" viewBox="0 0 10 10" preserveAspectRatio="none"><path d="M0 0H10V10z" fill="#ec1c1c"/></svg>
<div style="left:1104.00px;top:371.45px;width:2.00px;height:21.20px;background:#8e969e;border-bottom:1.5px solid rgba(6,33,71,0.72);"></div>
<div style="left:445.00px;top:392.65px;width:40.30px;height:21.20px;background:#efc35a;border-bottom:1.5px solid rgba(6,33,71,0.72);"></div>
<div style="filter:grayscale(1);top:396.70px;font-size:14px;line-height:14px;color:#2f2f2f;font-weight:normal;white-space:nowrap;letter-spacing:0.3px;left:452.00px;">E…t</div>
<div style="left:490.00px;top:392.65px;width:7.00px;height:21.20px;background:#efc35a;border-bottom:1.5px solid rgba(6,33,71,0.72);"></div>
<div style="left:497.00px;top:392.65px;width:1.20px;height:83.20px;background:#d8b0b8;"></div>
<div style="left:503.00px;top:392.65px;width:2.00px;height:21.20px;background:#8e969e;border-bottom:1.5px solid rgba(6,33,71,0.72);"></div>
<div style="left:542.20px;top:392.65px;width:53.80px;height:21.20px;background:#efc35a;border-bottom:1.5px solid rgba(6,33,71,0.72);"></div>
<div style="filter:grayscale(1);top:396.70px;font-size:14px;line-height:14px;color:#2f2f2f;font-weight:normal;white-space:nowrap;letter-spacing:0.3px;left:549.00px;">Co…t</div>
<div style="left:597.40px;top:392.65px;width:10.60px;height:21.20px;background:#c3f1c3;border-bottom:1.5px solid rgba(6,33,71,0.72);"></div>
<div style="left:619.00px;top:392.65px;width:2.00px;height:21.20px;background:#9cc8d8;border-bottom:1.5px solid rgba(6,33,71,0.72);"></div>
<div style="left:738.60px;top:392.65px;width:6.40px;height:21.20px;background:#efc35a;border-bottom:1.5px solid rgba(6,33,71,0.72);"></div>
<div style="left:745.00px;top:392.65px;width:1.20px;height:21.20px;background:#8a7a40;border-bottom:1.5px solid rgba(6,33,71,0.72);"></div>
<div style="left:746.20px;top:392.65px;width:68.80px;height:21.20px;background:#efc35a;border-bottom:1.5px solid rgba(6,33,71,0.72);"></div>
<div style="filter:grayscale(1);top:396.70px;font-size:14px;line-height:14px;color:#2f2f2f;font-weight:normal;white-space:nowrap;letter-spacing:0.3px;left:752.50px;">Co…de</div>
<div style="left:815.00px;top:392.65px;width:0.80px;height:21.20px;background:#7b7550;border-bottom:1.5px solid rgba(6,33,71,0.72);"></div>
<div style="left:815.80px;top:392.65px;width:156.20px;height:21.20px;background:#dde9c5;border-bottom:1.5px solid rgba(6,33,71,0.72);"></div>
<div style="filter:grayscale(1);top:396.70px;font-size:14px;line-height:14px;color:#2f2f2f;font-weight:normal;white-space:nowrap;letter-spacing:0.3px;left:822.40px;">(anonymous)</div>
<div style="left:975.10px;top:392.65px;width:126.40px;height:21.20px;background:#efc35a;border-bottom:1.5px solid rgba(6,33,71,0.72);"></div>
<div style="filter:grayscale(1);top:396.70px;font-size:14px;line-height:14px;color:#2f2f2f;font-weight:normal;white-space:nowrap;letter-spacing:0.3px;left:980.70px;">Function Call</div>
<div style="left:445.00px;top:413.85px;width:28.70px;height:21.20px;background:#efc35a;border-bottom:1.5px solid rgba(6,33,71,0.72);"></div>
<div style="left:474.00px;top:413.85px;width:11.70px;height:21.20px;background:#c3e8f0;border-bottom:1.5px solid rgba(6,33,71,0.72);"></div>
<div style="left:490.00px;top:413.85px;width:7.00px;height:21.20px;background:#efc35a;border-bottom:1.5px solid rgba(6,33,71,0.72);"></div>
<div style="left:503.00px;top:413.85px;width:1.30px;height:21.20px;background:#b8963e;border-bottom:1.5px solid rgba(6,33,71,0.72);"></div>
<div style="left:542.20px;top:413.85px;width:53.80px;height:21.20px;background:#efc35a;border-bottom:1.5px solid rgba(6,33,71,0.72);"></div>
<div style="filter:grayscale(1);top:417.90px;font-size:14px;line-height:14px;color:#2f2f2f;font-weight:normal;white-space:nowrap;letter-spacing:0.3px;left:549.00px;">Co…e</div>
<div style="left:597.40px;top:413.85px;width:10.60px;height:21.20px;background:#c3f1c3;border-bottom:1.5px solid rgba(6,33,71,0.72);"></div>
<div style="left:620.50px;top:413.85px;width:1.30px;height:21.20px;background:#b8963e;border-bottom:1.5px solid rgba(6,33,71,0.72);"></div>
<div style="left:746.20px;top:413.85px;width:25.00px;height:21.20px;background:#dde9c5;border-bottom:1.5px solid rgba(6,33,71,0.72);"></div>
<div style="left:771.20px;top:413.85px;width:33.50px;height:19.60px;background:#6f8989;"></div>
<div style="left:772.20px;top:413.85px;width:2.00px;height:19.60px;background:#b9c9a9;"></div>
<div style="left:777.20px;top:413.85px;width:2.00px;height:19.60px;background:#b9c9a9;"></div>
<div style="left:782.20px;top:413.85px;width:2.00px;height:19.60px;background:#b9c9a9;"></div>
<div style="left:787.20px;top:413.85px;width:2.00px;height:19.60px;background:#b9c9a9;"></div>
<div style="left:792.20px;top:413.85px;width:2.00px;height:19.60px;background:#b9c9a9;"></div>
<div style="left:797.20px;top:413.85px;width:2.00px;height:19.60px;background:#b9c9a9;"></div>
<div style="left:802.20px;top:413.85px;width:2.00px;height:19.60px;background:#b9c9a9;"></div>
<div style="left:804.70px;top:413.85px;width:9.30px;height:21.20px;background:#dde9c5;border-bottom:1.5px solid rgba(6,33,71,0.72);"></div>
<div style="left:815.80px;top:413.85px;width:156.20px;height:21.20px;background:#dde9c5;border-bottom:1.5px solid rgba(6,33,71,0.72);"></div>
<div style="filter:grayscale(1);top:417.90px;font-size:14px;line-height:14px;color:#2f2f2f;font-weight:normal;white-space:nowrap;letter-spacing:0.3px;left:822.40px;">webpackUn…finition</div>
<div style="left:975.10px;top:413.85px;width:126.40px;height:21.20px;background:#dde9c5;border-bottom:1.5px solid rgba(6,33,71,0.72);"></div>
<div style="filter:grayscale(1);top:417.90px;font-size:14px;line-height:14px;color:#2f2f2f;font-weight:normal;white-space:nowrap;letter-spacing:0.3px;left:980.70px;">(anonymous)</div>
<div style="left:445.00px;top:435.05px;width:28.70px;height:21.20px;background:#efc35a;border-bottom:1.5px solid rgba(6,33,71,0.72);"></div>
<div style="left:474.00px;top:435.05px;width:11.70px;height:21.20px;background:#c3e8f0;border-bottom:1.5px solid rgba(6,33,71,0.72);"></div>
<div style="left:597.40px;top:435.05px;width:10.60px;height:21.20px;background:#c3f1c3;border-bottom:1.5px solid rgba(6,33,71,0.72);"></div>
<div style="left:746.20px;top:435.05px;width:25.00px;height:21.20px;background:#dde9c5;border-bottom:1.5px solid rgba(6,33,71,0.72);"></div>
<div style="left:771.20px;top:435.05px;width:33.50px;height:19.60px;background:#6f8989;"></div>
<div style="left:772.20px;top:435.05px;width:2.00px;height:19.60px;background:#b9c9a9;"></div>
<div style="left:777.20px;top:435.05px;width:2.00px;height:19.60px;background:#b9c9a9;"></div>
<div style="left:782.20px;top:435.05px;width:2.00px;height:19.60px;background:#b9c9a9;"></div>
<div style="left:787.20px;top:435.05px;width:2.00px;height:19.60px;background:#b9c9a9;"></div>
<div style="left:792.20px;top:435.05px;width:2.00px;height:19.60px;background:#b9c9a9;"></div>
<div style="left:797.20px;top:435.05px;width:2.00px;height:19.60px;background:#b9c9a9;"></div>
<div style="left:802.20px;top:435.05px;width:2.00px;height:19.60px;background:#b9c9a9;"></div>
<div style="left:804.70px;top:435.05px;width:9.30px;height:21.20px;background:#dde9c5;border-bottom:1.5px solid rgba(6,33,71,0.72);"></div>
<div style="left:815.80px;top:435.05px;width:156.20px;height:21.20px;background:#dde9c5;border-bottom:1.5px solid rgba(6,33,71,0.72);"></div>
<div style="filter:grayscale(1);top:439.10px;font-size:14px;line-height:14px;color:#2f2f2f;font-weight:normal;white-space:nowrap;letter-spacing:0.3px;left:822.40px;">(anonymous)</div>
<div style="left:975.10px;top:435.05px;width:126.40px;height:21.20px;background:#dde9c5;border-bottom:1.5px solid rgba(6,33,71,0.72);"></div>
<div style="filter:grayscale(1);top:439.10px;font-size:14px;line-height:14px;color:#2f2f2f;font-weight:normal;white-space:nowrap;letter-spacing:0.3px;left:980.70px;">transfo…iptTags</div>
<div style="left:474.00px;top:456.25px;width:11.70px;height:21.20px;background:#c3e8f0;border-bottom:1.5px solid rgba(6,33,71,0.72);"></div>
<div style="left:597.00px;top:456.25px;width:11.00px;height:19.60px;background:#6f8989;"></div>
<div style="left:598.00px;top:456.25px;width:1.50px;height:19.60px;background:#b9c9a9;"></div>
<div style="left:601.50px;top:456.25px;width:1.50px;height:19.60px;background:#b9c9a9;"></div>
<div style="left:605.00px;top:456.25px;width:1.50px;height:19.60px;background:#b9c9a9;"></div>
<div style="left:815.80px;top:456.25px;width:156.20px;height:21.20px;background:#dde9c5;border-bottom:1.5px solid rgba(6,33,71,0.72);"></div>
<div style="filter:grayscale(1);top:460.30px;font-size:14px;line-height:14px;color:#2f2f2f;font-weight:normal;white-space:nowrap;letter-spacing:0.3px;left:822.40px;">(anonymous)</div>
<div style="left:975.10px;top:456.25px;width:126.40px;height:21.20px;background:#dde9c5;border-bottom:1.5px solid rgba(6,33,71,0.72);"></div>
<div style="filter:grayscale(1);top:460.30px;font-size:14px;line-height:14px;color:#2f2f2f;font-weight:normal;white-space:nowrap;letter-spacing:0.3px;left:980.70px;">runScripts</div>
<div style="left:474.00px;top:477.45px;width:11.70px;height:21.20px;background:#c3e8f0;border-bottom:1.5px solid rgba(6,33,71,0.72);"></div>
<div style="left:597.00px;top:477.45px;width:5.00px;height:21.20px;background:#9a9266;border-bottom:1.5px solid rgba(6,33,71,0.72);"></div>
<div style="left:603.00px;top:477.45px;width:5.00px;height:21.20px;background:#a09060;border-bottom:1.5px solid rgba(6,33,71,0.72);"></div>
<div style="left:815.80px;top:477.45px;width:156.20px;height:21.20px;background:#dde9c5;border-bottom:1.5px solid rgba(6,33,71,0.72);"></div>
<div style="filter:grayscale(1);top:481.50px;font-size:14px;line-height:14px;color:#2f2f2f;font-weight:normal;white-space:nowrap;letter-spacing:0.3px;left:822.40px;">__webpack_require__</div>
<div style="left:974.80px;top:477.45px;width:3.20px;height:21.20px;background:#b8963e;border-bottom:1.5px solid rgba(6,33,71,0.72);"></div>
<div style="left:978.00px;top:477.45px;width:123.50px;height:21.20px;background:#dde9c5;border-bottom:1.5px solid rgba(6,33,71,0.72);"></div>
<div style="filter:grayscale(1);top:481.50px;font-size:14px;line-height:14px;color:#2f2f2f;font-weight:normal;white-space:nowrap;letter-spacing:0.3px;left:985.50px;">loadScripts</div>
<div style="left:474.00px;top:498.65px;width:11.70px;height:21.20px;background:#c3e8f0;border-bottom:1.5px solid rgba(6,33,71,0.72);"></div>
<div style="left:604.00px;top:498.65px;width:2.00px;height:21.20px;background:#8e969e;border-bottom:1.5px solid rgba(6,33,71,0.72);"></div>
<div style="left:607.00px;top:498.65px;width:1.30px;height:21.20px;background:#b8963e;border-bottom:1.5px solid rgba(6,33,71,0.72);"></div>
<div style="left:815.80px;top:498.65px;width:156.20px;height:21.20px;background:#dde9c5;border-bottom:1.5px solid rgba(6,33,71,0.72);"></div>
<div style="filter:grayscale(1);top:502.70px;font-size:14px;line-height:14px;color:#2f2f2f;font-weight:normal;white-space:nowrap;letter-spacing:0.3px;left:822.40px;">(anonymous)</div>
<div style="left:978.00px;top:498.65px;width:123.50px;height:21.20px;background:#dde9c5;border-bottom:1.5px solid rgba(6,33,71,0.72);"></div>
<div style="filter:grayscale(1);top:502.70px;font-size:14px;line-height:14px;color:#2f2f2f;font-weight:normal;white-space:nowrap;letter-spacing:0.3px;left:985.50px;">check</div>
<div style="left:473.00px;top:519.85px;width:8.50px;height:21.20px;background:#c3e8f0;border-bottom:1.5px solid rgba(6,33,71,0.72);"></div>
<div style="left:481.50px;top:519.85px;width:4.50px;height:21.20px;background:#c8a850;border-bottom:1.5px solid rgba(6,33,71,0.72);"></div>
<div style="left:604.00px;top:519.85px;width:1.20px;height:21.20px;background:#8e969e;border-bottom:1.5px solid rgba(6,33,71,0.72);"></div>
<div style="left:607.50px;top:519.85px;width:1.20px;height:21.20px;background:#8e969e;border-bottom:1.5px solid rgba(6,33,71,0.72);"></div>
<div style="left:815.80px;top:519.85px;width:103.90px;height:21.20px;background:#dde9c5;border-bottom:1.5px solid rgba(6,33,71,0.72);"></div>
<div style="filter:grayscale(1);top:523.90px;font-size:14px;line-height:14px;color:#2f2f2f;font-weight:normal;white-space:nowrap;letter-spacing:0.3px;left:822.40px;">__web…ire__</div>
<div style="left:919.70px;top:519.85px;width:1.30px;height:21.20px;background:#b8963e;border-bottom:1.5px solid rgba(6,33,71,0.72);"></div>
<div style="left:921.00px;top:519.85px;width:48.40px;height:21.20px;background:#dde9c5;border-bottom:1.5px solid rgba(6,33,71,0.72);"></div>
<div style="filter:grayscale(1);top:523.90px;font-size:14px;line-height:14px;color:#2f2f2f;font-weight:normal;white-space:nowrap;letter-spacing:0.3px;left:927.00px;">__…_</div>
<div style="left:969.50px;top:519.85px;width:2.00px;height:21.20px;background:#b8963e;border-bottom:1.5px solid rgba(6,33,71,0.72);"></div>
<div style="left:978.00px;top:519.85px;width:123.50px;height:21.20px;background:#dde9c5;border-bottom:1.5px solid rgba(6,33,71,0.72);"></div>
<div style="filter:grayscale(1);top:523.90px;font-size:14px;line-height:14px;color:#2f2f2f;font-weight:normal;white-space:nowrap;letter-spacing:0.3px;left:985.50px;">run</div>
<div style="left:475.00px;top:541.05px;width:7.00px;height:21.20px;background:#c3e8f0;border-bottom:1.5px solid rgba(6,33,71,0.72);"></div>
<div style="left:482.00px;top:541.05px;width:2.00px;height:21.20px;background:#b8963e;border-bottom:1.5px solid rgba(6,33,71,0.72);"></div>
<div style="left:604.00px;top:541.05px;width:3.00px;height:21.20px;background:#b8963e;border-bottom:1.5px solid rgba(6,33,71,0.72);"></div>
<div style="left:607.50px;top:541.05px;width:1.20px;height:21.20px;background:#8e969e;border-bottom:1.5px solid rgba(6,33,71,0.72);"></div>
<div style="left:815.80px;top:541.05px;width:103.80px;height:21.20px;background:#dde9c5;border-bottom:1.5px solid rgba(6,33,71,0.72);"></div>
<div style="filter:grayscale(1);top:545.10px;font-size:14px;line-height:14px;color:#2f2f2f;font-weight:normal;white-space:nowrap;letter-spacing:0.3px;left:822.40px;">(anonymous)</div>
<div style="left:920.80px;top:541.05px;width:14.90px;height:21.20px;background:#dde9c5;border-bottom:1.5px solid rgba(6,33,71,0.72);"></div>
<div style="left:921.50px;top:541.05px;width:1.00px;height:21.20px;background:#8fa0a0;border-bottom:1.5px solid rgba(6,33,71,0.72);"></div>
<div style="left:930.00px;top:541.05px;width:5.70px;height:21.20px;background:#7d9494;border-bottom:1.5px solid rgba(6,33,71,0.72);"></div>
<div style="left:935.70px;top:541.05px;width:33.70px;height:21.20px;background:#dde9c5;border-bottom:1.5px solid rgba(6,33,71,0.72);"></div>
<div style="filter:grayscale(1);top:545.10px;font-size:14px;line-height:14px;color:#2f2f2f;font-weight:normal;white-space:nowrap;letter-spacing:0.3px;left:942.60px;">(…</div>
<div style="left:969.40px;top:541.05px;width:1.60px;height:21.20px;background:#8fa0a0;border-bottom:1.5px solid rgba(6,33,71,0.72);"></div>
<div style="left:978.00px;top:541.05px;width:91.40px;height:21.20px;background:#dde9c5;border-bottom:1.5px solid rgba(6,33,71,0.72);"></div>
<div style="filter:grayscale(1);top:545.10px;font-size:14px;line-height:14px;color:#2f2f2f;font-weight:normal;white-space:nowrap;letter-spacing:0.3px;left:985.50px;">tran…Code</div>
<div style="left:1069.40px;top:541.05px;width:31.30px;height:21.20px;background:#efc35a;border-bottom:1.5px solid rgba(6,33,71,0.72);"></div>
<div style="left:475.00px;top:562.25px;width:6.00px;height:21.20px;background:#c3e8f0;border-bottom:1.5px solid rgba(6,33,71,0.72);"></div>
<div style="left:481.50px;top:562.25px;width:1.00px;height:21.20px;background:#b8963e;border-bottom:1.5px solid rgba(6,33,71,0.72);"></div>
<div style="left:483.00px;top:562.25px;width:3.00px;height:21.20px;background:#8e969e;border-bottom:1.5px solid rgba(6,33,71,0.72);"></div>
<div style="left:607.50px;top:562.25px;width:1.20px;height:21.20px;background:#8e969e;border-bottom:1.5px solid rgba(6,33,71,0.72);"></div>
<div style="left:815.80px;top:562.25px;width:103.80px;height:21.20px;background:#dde9c5;border-bottom:1.5px solid rgba(6,33,71,0.72);"></div>
<div style="filter:grayscale(1);top:566.30px;font-size:14px;line-height:14px;color:#2f2f2f;font-weight:normal;white-space:nowrap;letter-spacing:0.3px;left:822.40px;">__web…ire__</div>
<div style="left:920.80px;top:562.25px;width:14.90px;height:21.20px;background:#dde9c5;border-bottom:1.5px solid rgba(6,33,71,0.72);"></div>
<div style="left:921.50px;top:562.25px;width:1.00px;height:21.20px;background:#8fa0a0;border-bottom:1.5px solid rgba(6,33,71,0.72);"></div>
<div style="left:930.00px;top:562.25px;width:5.70px;height:21.20px;background:#7d9494;border-bottom:1.5px solid rgba(6,33,71,0.72);"></div>
<div style="left:935.70px;top:562.25px;width:33.70px;height:21.20px;background:#dde9c5;border-bottom:1.5px solid rgba(6,33,71,0.72);"></div>
<div style="filter:grayscale(1);top:566.30px;font-size:14px;line-height:14px;color:#2f2f2f;font-weight:normal;white-space:nowrap;letter-spacing:0.3px;left:942.60px;">_…</div>
<div style="left:969.40px;top:562.25px;width:1.60px;height:21.20px;background:#8fa0a0;border-bottom:1.5px solid rgba(6,33,71,0.72);"></div>
<div style="left:978.00px;top:562.25px;width:91.40px;height:21.20px;background:#dde9c5;border-bottom:1.5px solid rgba(6,33,71,0.72);"></div>
<div style="filter:grayscale(1);top:566.30px;font-size:14px;line-height:14px;color:#2f2f2f;font-weight:normal;white-space:nowrap;letter-spacing:0.3px;left:985.50px;">transform</div>
<div style="left:1069.40px;top:562.25px;width:31.30px;height:21.20px;background:#efc35a;border-bottom:1.5px solid rgba(6,33,71,0.72);"></div>
<div style="left:475.00px;top:583.45px;width:6.00px;height:21.20px;background:#b9d6e0;border-bottom:1.5px solid rgba(6,33,71,0.72);"></div>
<div style="left:483.00px;top:583.45px;width:2.00px;height:21.20px;background:#8e969e;border-bottom:1.5px solid rgba(6,33,71,0.72);"></div>
<div style="left:815.80px;top:583.45px;width:103.80px;height:21.20px;background:#dde9c5;border-bottom:1.5px solid rgba(6,33,71,0.72);"></div>
<div style="filter:grayscale(1);top:587.50px;font-size:14px;line-height:14px;color:#2f2f2f;font-weight:normal;white-space:nowrap;letter-spacing:0.3px;left:822.40px;">(anonymous)</div>
<div style="left:920.80px;top:583.45px;width:14.90px;height:21.20px;background:#dde9c5;border-bottom:1.5px solid rgba(6,33,71,0.72);"></div>
<div style="left:921.00px;top:583.45px;width:2.50px;height:21.20px;background:#a8904a;border-bottom:1.5px solid rgba(6,33,71,0.72);"></div>
<div style="left:928.00px;top:583.45px;width:4.00px;height:21.20px;background:#9a8a50;border-bottom:1.5px solid rgba(6,33,71,0.72);"></div>
<div style="left:935.70px;top:583.45px;width:33.70px;height:21.20px;background:#dde9c5;border-bottom:1.5px solid rgba(6,33,71,0.72);"></div>
<div style="filter:grayscale(1);top:587.50px;font-size:14px;line-height:14px;color:#2f2f2f;font-weight:normal;white-space:nowrap;letter-spacing:0.3px;left:942.60px;">(…</div>
<div style="left:969.40px;top:583.45px;width:1.60px;height:21.20px;background:#b8963e;border-bottom:1.5px solid rgba(6,33,71,0.72);"></div>
<div style="left:978.00px;top:583.45px;width:91.40px;height:21.20px;background:#dde9c5;border-bottom:1.5px solid rgba(6,33,71,0.72);"></div>
<div style="filter:grayscale(1);top:587.50px;font-size:14px;line-height:14px;color:#2f2f2f;font-weight:normal;white-space:nowrap;letter-spacing:0.3px;left:985.50px;">transform</div>
<div style="left:1069.40px;top:583.45px;width:31.30px;height:21.20px;background:#f4d9d6;border-bottom:1.5px solid rgba(6,33,71,0.72);"></div>
<div style="filter:grayscale(1);top:587.50px;font-size:14px;line-height:14px;color:#2f2f2f;font-weight:normal;white-space:nowrap;letter-spacing:0.3px;left:1077.40px;">(…</div>
<div style="left:475.00px;top:604.65px;width:6.00px;height:21.20px;background:#b3cad6;border-bottom:1.5px solid rgba(6,33,71,0.72);"></div>
<div style="left:484.00px;top:604.65px;width:1.20px;height:21.20px;background:#b8963e;border-bottom:1.5px solid rgba(6,33,71,0.72);"></div>
<div style="left:815.80px;top:604.65px;width:103.80px;height:21.20px;background:#dde9c5;border-bottom:1.5px solid rgba(6,33,71,0.72);"></div>
<div style="filter:grayscale(1);top:608.70px;font-size:14px;line-height:14px;color:#2f2f2f;font-weight:normal;white-space:nowrap;letter-spacing:0.3px;left:822.40px;">__web…ire__</div>
<div style="left:920.80px;top:604.65px;width:19.70px;height:21.20px;background:#dde9c5;border-bottom:1.5px solid rgba(6,33,71,0.72);"></div>
<div style="left:922.00px;top:604.65px;width:1.00px;height:21.20px;background:#8a7a40;border-bottom:1.5px solid rgba(6,33,71,0.72);"></div>
<div style="left:928.00px;top:604.65px;width:4.00px;height:21.20px;background:#062147;border-bottom:1.5px solid rgba(6,33,71,0.72);"></div>
<div style="left:933.00px;top:604.65px;width:1.00px;height:21.20px;background:#b8963e;border-bottom:1.5px solid rgba(6,33,71,0.72);"></div>
<div style="left:939.50px;top:604.65px;width:1.00px;height:21.20px;background:#8fa0a0;border-bottom:1.5px solid rgba(6,33,71,0.72);"></div>
<div style="left:940.50px;top:604.65px;width:28.90px;height:21.20px;background:#dde9c5;border-bottom:1.5px solid rgba(6,33,71,0.72);"></div>
<div style="left:969.40px;top:604.65px;width:1.60px;height:21.20px;background:#b8963e;border-bottom:1.5px solid rgba(6,33,71,0.72);"></div>
<div style="left:978.00px;top:604.65px;width:26.60px;height:21.20px;background:#dde9c5;border-bottom:1.5px solid rgba(6,33,71,0.72);"></div>
<div style="left:1004.60px;top:604.65px;width:0.90px;height:21.20px;background:#7b8a70;border-bottom:1.5px solid rgba(6,33,71,0.72);"></div>
<div style="left:1005.50px;top:604.65px;width:63.90px;height:21.20px;background:#dde9c5;border-bottom:1.5px solid rgba(6,33,71,0.72);"></div>
<div style="filter:grayscale(1);top:608.70px;font-size:14px;line-height:14px;color:#2f2f2f;font-weight:normal;white-space:nowrap;letter-spacing:0.3px;left:1012.60px;">wrap</div>
<div style="left:1069.40px;top:604.65px;width:1.10px;height:21.20px;background:#a0905a;border-bottom:1.5px solid rgba(6,33,71,0.72);"></div>
<div style="left:1070.50px;top:604.65px;width:30.20px;height:21.20px;background:#c3f1c3;border-bottom:1.5px solid rgba(6,33,71,0.72);"></div>
<div style="left:474.00px;top:625.85px;width:7.00px;height:21.20px;background:#a9bccb;border-bottom:1.5px solid rgba(6,33,71,0.72);"></div>
<div style="left:815.80px;top:625.85px;width:103.80px;height:21.20px;background:#dde9c5;border-bottom:1.5px solid rgba(6,33,71,0.72);"></div>
<div style="filter:grayscale(1);top:629.90px;font-size:14px;line-height:14px;color:#2f2f2f;font-weight:normal;white-space:nowrap;letter-spacing:0.3px;left:822.40px;">(anonymous)</div>
<div style="left:920.80px;top:625.85px;width:48.60px;height:21.20px;background:#dde9c5;border-bottom:1.5px solid rgba(6,33,71,0.72);"></div>
<div style="left:921.50px;top:625.85px;width:1.50px;height:21.20px;background:#7d9494;border-bottom:1.5px solid rgba(6,33,71,0.72);"></div>
<div style="left:928.00px;top:625.85px;width:4.00px;height:21.20px;background:#062147;border-bottom:1.5px solid rgba(6,33,71,0.72);"></div>
<div style="left:935.00px;top:625.85px;width:4.00px;height:21.20px;background:#a8904a;border-bottom:1.5px solid rgba(6,33,71,0.72);"></div>
<div style="left:941.00px;top:625.85px;width:3.00px;height:21.20px;background:#9aa8a8;border-bottom:1.5px solid rgba(6,33,71,0.72);"></div>
<div style="left:951.00px;top:625.85px;width:1.50px;height:21.20px;background:#062147;border-bottom:1.5px solid rgba(6,33,71,0.72);"></div>
<div style="left:958.50px;top:625.85px;width:1.50px;height:21.20px;background:#062147;border-bottom:1.5px solid rgba(6,33,71,0.72);"></div>
<div style="left:966.00px;top:625.85px;width:3.40px;height:21.20px;background:#a8904a;border-bottom:1.5px solid rgba(6,33,71,0.72);"></div>
<div style="left:978.00px;top:625.85px;width:26.60px;height:21.20px;background:#dde9c5;border-bottom:1.5px solid rgba(6,33,71,0.72);"></div>
<div style="left:1004.60px;top:625.85px;width:0.90px;height:21.20px;background:#b8963e;border-bottom:1.5px solid rgba(6,33,71,0.72);"></div>
<div style="left:1005.50px;top:625.85px;width:61.50px;height:21.20px;background:#dde9c5;border-bottom:1.5px solid rgba(6,33,71,0.72);"></div>
<div style="filter:grayscale(1);top:629.90px;font-size:14px;line-height:14px;color:#2f2f2f;font-weight:normal;white-space:nowrap;letter-spacing:0.3px;left:1012.60px;">(an…s)</div>
<div style="left:1067.00px;top:625.85px;width:2.40px;height:21.20px;background:#062147;border-bottom:1.5px solid rgba(6,33,71,0.72);"></div>
<div style="left:1069.40px;top:625.85px;width:2.60px;height:21.20px;background:#dde9c5;border-bottom:1.5px solid rgba(6,33,71,0.72);"></div>
<div style="left:1073.00px;top:625.85px;width:27.70px;height:21.20px;background:#c3f1c3;border-bottom:1.5px solid rgba(6,33,71,0.72);"></div>
<div style="left:815.80px;top:647.05px;width:156.20px;height:21.20px;background:#dde9c5;border-bottom:1.5px solid rgba(6,33,71,0.72);"></div>
<div style="left:978.00px;top:647.05px;width:123.50px;height:21.20px;background:#dde9c5;border-bottom:1.5px solid rgba(6,33,71,0.72);"></div>
<div style="left:1100.8px;top:232px;width:1px;height:28.7px;background:repeating-linear-gradient(#b8322c 0 8px, transparent 8px 12.6px)"></div>
<div style="left:1101.8px;top:232px;width:1px;height:28.7px;background:repeating-linear-gradient(#2a64c0 0 8px, transparent 8px 12.6px)"></div>
<div style="left:1110px;top:232px;width:1px;height:28.7px;background:repeating-linear-gradient(#1f5c38 0 6px, transparent 6px 12.6px)"></div>
<div style="left:1100.8px;top:280.4px;width:1px;height:367.6px;background:repeating-linear-gradient(#b8322c 0 8px, transparent 8px 12.6px)"></div>
<div style="left:1101.8px;top:280.4px;width:1px;height:367.6px;background:repeating-linear-gradient(#2a64c0 0 8px, transparent 8px 12.6px)"></div>
<div style="left:1110px;top:280.4px;width:1px;height:367.6px;background:repeating-linear-gradient(#1f5c38 0 6px, transparent 6px 12.6px)"></div>
<div style="left:301.00px;top:326.50px;width:3.00px;height:321.50px;background:#3b7de0;"></div>
<div style="left:301.00px;top:326.50px;width:10.00px;height:1.30px;background:#3b7de0;"></div>
<div style="left:311.00px;top:232.00px;width:3.00px;height:416.00px;background:#fcc934;"></div>
</body></html>
